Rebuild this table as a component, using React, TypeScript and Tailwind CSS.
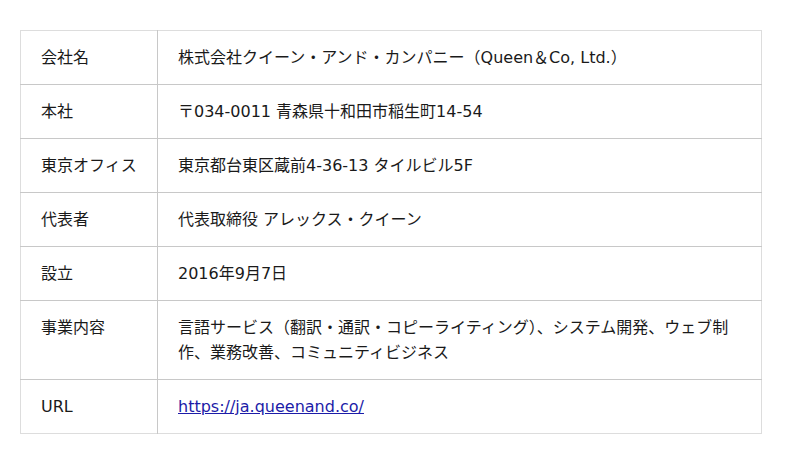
import React from "react";

const rows: { label: string; value: React.ReactNode }[] = [
  { label: "会社名", value: "株式会社クイーン・アンド・カンパニー（Queen＆Co, Ltd.）" },
  { label: "本社", value: "〒034-0011 青森県十和田市稲生町14-54" },
  { label: "東京オフィス", value: "東京都台東区蔵前4-36-13 タイルビル5F" },
  { label: "代表者", value: "代表取締役 アレックス・クイーン" },
  { label: "設立", value: "2016年9月7日" },
  {
    label: "事業内容",
    value:
      "言語サービス（翻訳・通訳・コピーライティング）、システム開発、ウェブ制作、業務改善、コミュニティビジネス",
  },
  {
    label: "URL",
    value: (
      <a href="#" className="text-[#1c1ca8] underline">
        https://ja.queenand.co/
      </a>
    ),
  },
];

export default function App() {
  return (
    <div
      className="w-[800px] h-[464px] bg-white px-[20px] pt-[30px] text-[#1a1a1a] text-[16px] leading-[25px]"
      style={{ fontFamily: '"DejaVu Sans", "Noto Sans CJK JP", sans-serif' }}
    >
      <table className="w-[742px] border-collapse border border-[#dddddd]">
        <tbody>
          {rows.map((r) => (
            <tr key={r.label} className="border-b border-[#c8c8c8] last:border-b-[#dddddd]">
              <td className="w-[137px] border-r border-[#c8c8c8] px-[20px] py-[14px] align-top">
                {r.label}
              </td>
              <td className="px-[20px] py-[14px] align-top">{r.value}</td>
            </tr>
          ))}
        </tbody>
      </table>
    </div>
  );
}
